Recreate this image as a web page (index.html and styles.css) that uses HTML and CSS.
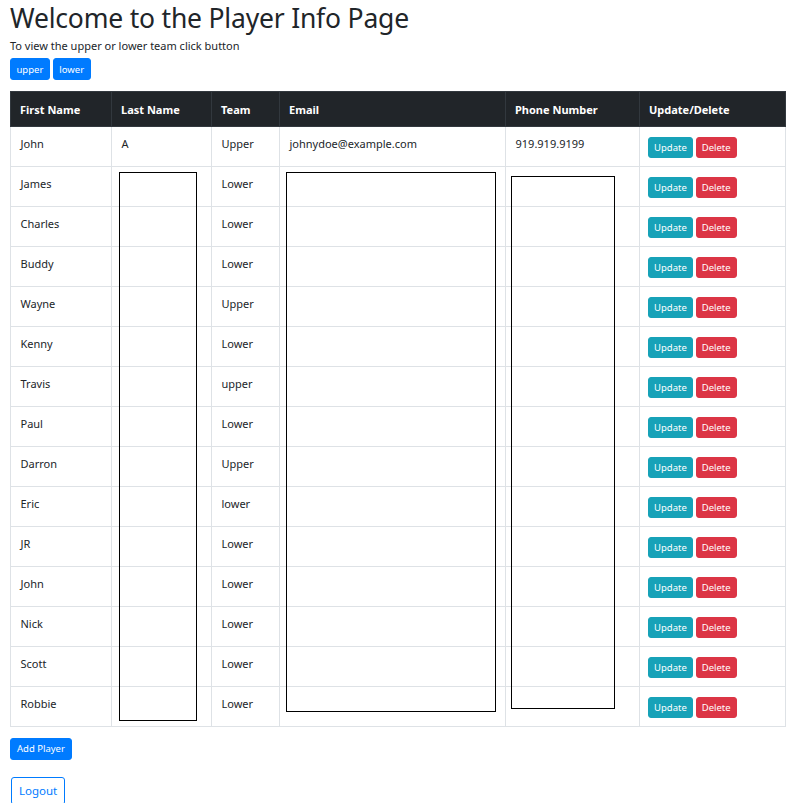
FILE: index.html
```html
<!DOCTYPE html>
<html>
<head>
<meta charset="utf-8">
<link rel="stylesheet" href="styles.css">
</head>
<body>
<div class="page">
  <h1 class="title">Welcome to the Player Info Page</h1>
  <p class="intro">To view the upper or lower team click button</p>
  <div class="team-buttons">
    <button class="btn btn-primary">upper</button>
    <button class="btn btn-primary">lower</button>
  </div>
  <div class="table-wrap">
    <table class="players">
      <colgroup>
        <col class="c1"><col class="c2"><col class="c3"><col class="c4"><col class="c5"><col class="c6">
      </colgroup>
      <thead>
        <tr><th>First Name</th><th>Last Name</th><th>Team</th><th>Email</th><th>Phone Number</th><th>Update/Delete</th></tr>
      </thead>
      <tbody>
        <tr><td>John</td><td>A</td><td>Upper</td><td>johnydoe@example.com</td><td>919.919.9199</td><td><span class="actions"><button class="btn btn-sm btn-info">Update</button><button class="btn btn-sm btn-danger">Delete</button></span></td></tr>
        <tr><td>James</td><td></td><td>Lower</td><td></td><td></td><td><span class="actions"><button class="btn btn-sm btn-info">Update</button><button class="btn btn-sm btn-danger">Delete</button></span></td></tr>
        <tr><td>Charles</td><td></td><td>Lower</td><td></td><td></td><td><span class="actions"><button class="btn btn-sm btn-info">Update</button><button class="btn btn-sm btn-danger">Delete</button></span></td></tr>
        <tr><td>Buddy</td><td></td><td>Lower</td><td></td><td></td><td><span class="actions"><button class="btn btn-sm btn-info">Update</button><button class="btn btn-sm btn-danger">Delete</button></span></td></tr>
        <tr><td>Wayne</td><td></td><td>Upper</td><td></td><td></td><td><span class="actions"><button class="btn btn-sm btn-info">Update</button><button class="btn btn-sm btn-danger">Delete</button></span></td></tr>
        <tr><td>Kenny</td><td></td><td>Lower</td><td></td><td></td><td><span class="actions"><button class="btn btn-sm btn-info">Update</button><button class="btn btn-sm btn-danger">Delete</button></span></td></tr>
        <tr><td>Travis</td><td></td><td>upper</td><td></td><td></td><td><span class="actions"><button class="btn btn-sm btn-info">Update</button><button class="btn btn-sm btn-danger">Delete</button></span></td></tr>
        <tr><td>Paul</td><td></td><td>Lower</td><td></td><td></td><td><span class="actions"><button class="btn btn-sm btn-info">Update</button><button class="btn btn-sm btn-danger">Delete</button></span></td></tr>
        <tr><td>Darron</td><td></td><td>Upper</td><td></td><td></td><td><span class="actions"><button class="btn btn-sm btn-info">Update</button><button class="btn btn-sm btn-danger">Delete</button></span></td></tr>
        <tr><td>Eric</td><td></td><td>lower</td><td></td><td></td><td><span class="actions"><button class="btn btn-sm btn-info">Update</button><button class="btn btn-sm btn-danger">Delete</button></span></td></tr>
        <tr><td>JR</td><td></td><td>Lower</td><td></td><td></td><td><span class="actions"><button class="btn btn-sm btn-info">Update</button><button class="btn btn-sm btn-danger">Delete</button></span></td></tr>
        <tr><td>John</td><td></td><td>Lower</td><td></td><td></td><td><span class="actions"><button class="btn btn-sm btn-info">Update</button><button class="btn btn-sm btn-danger">Delete</button></span></td></tr>
        <tr><td>Nick</td><td></td><td>Lower</td><td></td><td></td><td><span class="actions"><button class="btn btn-sm btn-info">Update</button><button class="btn btn-sm btn-danger">Delete</button></span></td></tr>
        <tr><td>Scott</td><td></td><td>Lower</td><td></td><td></td><td><span class="actions"><button class="btn btn-sm btn-info">Update</button><button class="btn btn-sm btn-danger">Delete</button></span></td></tr>
        <tr><td>Robbie</td><td></td><td>Lower</td><td></td><td></td><td><span class="actions"><button class="btn btn-sm btn-info">Update</button><button class="btn btn-sm btn-danger">Delete</button></span></td></tr>
      </tbody>
    </table>
    <div class="redact redact-last"></div>
    <div class="redact redact-email"></div>
    <div class="redact redact-phone"></div>
  </div>
  <div class="add-row">
    <button class="btn btn-primary">Add Player</button>
  </div>
  <div class="logout-row">
    <button class="btn btn-outline">Logout</button>
  </div>
</div>
</body>
</html>
```

FILE: styles.css
```css
html, body {
  margin: 0;
  padding: 0;
  background: #fff;
}
body {
  font-family: "Noto Sans", "Open Sans", sans-serif;
  color: #212529;
}
.page {
  padding: 0 10px;
}
.title {
  font-size: 26.5px;
  font-weight: 400;
  line-height: 34px;
  margin: 1px 0 0 0;
  color: #212529;
  letter-spacing: -0.2px;
}
.intro {
  font-size: 11px;
  line-height: 14px;
  margin: 4px 0 5px 0;
}
.team-buttons {
  display: flex;
  gap: 3px;
}
.btn {
  font-family: inherit;
  border: 1px solid transparent;
  border-radius: 3px;
  color: #fff;
  cursor: pointer;
  margin: 0;
}
.team-buttons .btn {
  font-size: 9.5px;
  height: 22px;
  padding: 0 5.5px;
}
.btn-primary {
  background: #007bff;
  border-color: #007bff;
}
.btn-info {
  background: #17a2b8;
  border-color: #17a2b8;
}
.btn-danger {
  background: #dc3545;
  border-color: #dc3545;
}
.btn-sm {
  font-size: 9.5px;
  height: 21px;
  padding: 0 5px;
}
.table-wrap {
  position: relative;
  margin-top: 11px;
  width: 775px;
}
.players {
  border-collapse: collapse;
  width: 775px;
  table-layout: fixed;
  font-size: 11px;
}
.c1 { width: 101px; }
.c2 { width: 100px; }
.c3 { width: 68px; }
.c4 { width: 226px; }
.c5 { width: 134px; }
.c6 { width: 146px; }
.players th {
  background: #212529;
  color: #fff;
  border: 1px solid #32383e;
  text-align: left;
  font-weight: 700;
  height: 35px;
  padding: 0 9px;
  box-sizing: border-box;
  vertical-align: middle;
}
.players td {
  border: 1px solid #dee2e6;
  height: 40px;
  padding: 9px 9px 0 9.5px;
  box-sizing: border-box;
  vertical-align: top;
  line-height: 16px;
}
.players tbody tr:first-child td {
  border-top: none;
}
.players td:last-child {
  padding: 10px 9px 0 8px;
}
.actions {
  display: flex;
  gap: 3px;
}
.redact {
  position: absolute;
  border: 1px solid #000;
  box-sizing: border-box;
}
.redact-last {
  left: 109px;
  top: 81px;
  width: 78px;
  height: 549px;
}
.redact-email {
  left: 276px;
  top: 81px;
  width: 210px;
  height: 540px;
}
.redact-phone {
  left: 501px;
  top: 85px;
  width: 104px;
  height: 533px;
}
.add-row {
  margin-top: 8px;
}
.add-row .btn {
  font-size: 9.5px;
  height: 22px;
  padding: 0 6px;
}
.logout-row {
  margin-top: 17px;
  padding-left: 1px;
}
.btn-outline {
  background: #fff;
  color: #007bff;
  border-color: #007bff;
  font-size: 11.5px;
  height: 28px;
  padding: 0 7px;
}
```
